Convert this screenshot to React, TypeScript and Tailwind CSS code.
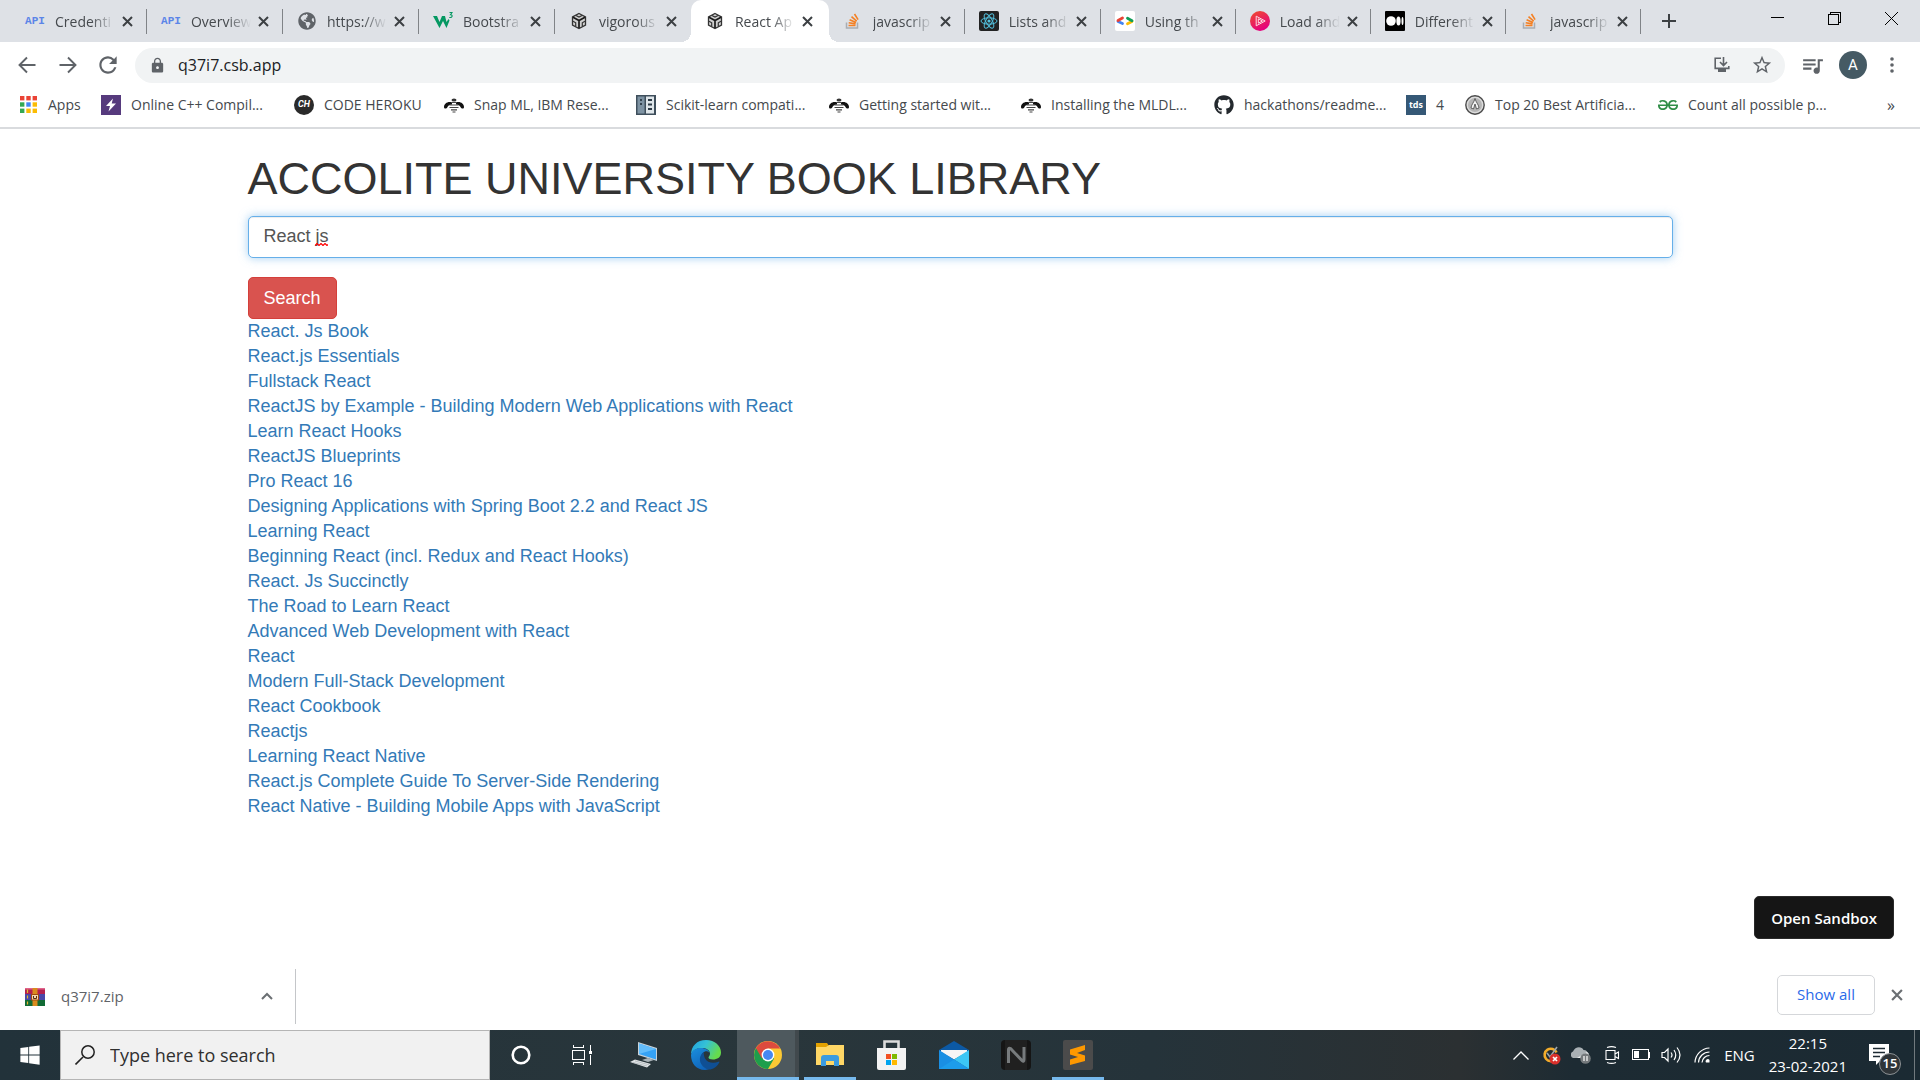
import type { ReactNode } from 'react';
import { FaGithub, FaGlobeAmericas, FaWindows } from 'react-icons/fa';
import { MdLock, MdQueueMusic, MdRefresh, MdStarBorder } from 'react-icons/md';
import { SiGeeksforgeeks } from 'react-icons/si';

/* ---------- site icons ---------- */

const ApiIcon = () => (
  <span className="font-['Liberation_Mono'] text-[11px] leading-5 font-bold text-[#5b85e8]">API</span>
);

const GlobeIcon = () => <FaGlobeAmericas className="size-[18px] text-[#5f6368]" />;

const W3Icon = () => (
  <svg viewBox="0 0 20 20" className="size-5">
    <path d="M0 5h4l2.500 6L9 5h3l1.500 6L15.500 8l1 1.500-3 7.500L10 10l-3.500 7z" fill="#059862" />
    <path d="M16.500 1.500h2.500l-1.500 2.200c2.300 0 2.300 3.300-1.200 2.800" fill="none" stroke="#059862" strokeWidth="1.100" />
  </svg>
);

const SandboxIcon = () => (
  <svg viewBox="0 0 20 20" className="size-5">
    <path d="M10 2.500 16.500 6v8L10 17.500 3.500 14V6z" fill="#d0d0d0" stroke="#333" strokeWidth="1.300" />
    <path d="M4 6.200 10 9.500l6-3.300M10 9.500V17" fill="none" stroke="#1a1a1a" strokeWidth="1.700" />
    <path d="M7 4.500l3 1.600 3-1.600M4 10.300l2.700 1.500v3.200M16 10.300l-2.700 1.500v3.200" fill="none" stroke="#333" strokeWidth="1.200" />
  </svg>
);

const StackIcon = () => (
  <svg viewBox="0 0 20 20" className="size-5">
    <path d="M3.500 11.500v5.500h11v-5.500" fill="none" stroke="#a9adb2" strokeWidth="1.500" />
    <path d="M5.500 14.500h7M5.700 11.700l6.900 1.200M6.600 8.700l6.400 2.900M8.500 5.600l5.200 4.500M11.500 3l3.600 5.600" stroke="#f48024" strokeWidth="1.600" />
  </svg>
);

const ReactIcon = () => (
  <svg viewBox="0 0 20 20" className="size-5">
    <rect width="20" height="20" rx="2" fill="#222" />
    <g fill="none" stroke="#53c1de" strokeWidth="1">
      <ellipse cx="10" cy="10" rx="8" ry="3.200" />
      <ellipse cx="10" cy="10" rx="8" ry="3.200" transform="rotate(60 10 10)" />
      <ellipse cx="10" cy="10" rx="8" ry="3.200" transform="rotate(120 10 10)" />
    </g>
    <circle cx="10" cy="10" r="1.600" fill="#53c1de" />
  </svg>
);

const DevelopersIcon = () => (
  <svg viewBox="0 0 20 20" className="size-5">
    <rect width="20" height="20" rx="2" fill="#fff" />
    <g strokeWidth="2.800" strokeLinecap="round">
      <path d="M3 10.500 7.500 12.500" stroke="#4285f4" />
      <path d="M3 9.500 7.500 7" stroke="#ea4335" />
      <path d="M12.500 12.800 17 10.500" stroke="#fbbc04" />
      <path d="M12.500 7.200 17 9.800" stroke="#0f9d58" />
    </g>
  </svg>
);

const PluralsightIcon = () => (
  <svg viewBox="0 0 20 20" className="size-5">
    <defs>
      <linearGradient id="ps" x1="0" y1="0" x2="0.500" y2="1">
        <stop offset="0" stopColor="#f0502c" />
        <stop offset="1" stopColor="#e5007e" />
      </linearGradient>
    </defs>
    <circle cx="10" cy="10" r="10" fill="url(#ps)" />
    <path d="M6.200 5.200v9.600l9-4.800zM8.300 7.800v4.400l4.200-2.200z" fill="none" stroke="#ffd9e2" strokeWidth="1" />
  </svg>
);

const MediumIcon = () => (
  <svg viewBox="0 0 20 20" className="size-5">
    <rect width="20" height="20" rx="1" fill="#000" />
    <circle cx="6" cy="10" r="4.800" fill="#fff" />
    <ellipse cx="13.500" cy="10" rx="2.100" ry="4.500" fill="#fff" />
    <ellipse cx="17.500" cy="10" rx="1" ry="4" fill="#fff" />
  </svg>
);

const AppsIcon = () => {
  const colours = ['#ea4335', '#ea4335', '#ea4335', '#34a853', '#4285f4', '#fbbc04', '#34a853', '#fbbc04', '#fbbc04'];
  return (
    <svg viewBox="0 0 17 17" className="size-[17px]">
      {colours.map((c, i) => (
        <rect key={i} x={(i % 3) * 6.300} y={Math.floor(i / 3) * 6.300} width="4.400" height="4.400" fill={c} />
      ))}
    </svg>
  );
};

const BoltIcon = () => (
  <svg viewBox="0 0 20 20" className="size-5">
    <rect width="20" height="20" fill="#563a7d" />
    <path d="M12 3.500 5 11h4l-1.500 5.500 7.500-8h-4.300z" fill="#fff" />
  </svg>
);

const HerokuIcon = () => (
  <span className="flex size-5 items-center justify-center rounded-full bg-[#2a2a2a] font-['Roboto'] text-[9px] font-bold text-white italic">CH</span>
);

const BeeIcon = () => (
  <svg viewBox="0 0 20 20" className="size-5">
    <ellipse cx="10" cy="5" rx="2.500" ry="1.500" fill="#333" />
    <path d="M8 7.500C4 6 0 8.500 0 12c0 2 2.500 2 3.500 0C4 10.500 6 9.500 8 9.500M12 7.500c4-1.500 8 1 8 4.500 0 2-2.500 2-3.500 0-.5-1.500-2.500-2.500-4.500-2.500" fill="#111" />
    <path d="M7 7.500h6M5.500 10h9M5.500 12.500h9M7 14.800h6M8.500 17h3" stroke="#444" strokeWidth="1.200" />
  </svg>
);

const ServerIcon = () => (
  <svg viewBox="0 0 20 20" className="size-5">
    <rect width="20" height="20" fill="#3f4f5c" />
    <rect x="1.500" y="1.500" width="7" height="17" fill="#7e93a3" />
    <rect x="10" y="1.500" width="8" height="17" fill="#dfe6ea" />
    <path d="M5 4v2M5 8v2M12 5h4M12 9.500h4M12 14h4" stroke="#2d3b46" strokeWidth="1.800" />
  </svg>
);

const TdsIcon = () => (
  <span className="flex size-5 items-center justify-center bg-[#355876] font-['Open_Sans'] text-[9px] font-bold text-white">tds</span>
);

const CoinIcon = () => (
  <svg viewBox="0 0 20 20" className="size-5">
    <circle cx="10" cy="10" r="9.200" fill="#dcdcdc" stroke="#4a4a4a" strokeWidth="1.400" />
    <circle cx="10" cy="10" r="7" fill="#b5b5b5" />
    <path d="M10 3.500c-1 4-4 6.500-4 9.500l2.500 1L10 9l1.500 5 2.500-1c0-3-3-5.500-4-9.500z" fill="#f4f4f4" stroke="#444" strokeWidth=".8" />
  </svg>
);

/* ---------- browser chrome ---------- */

const CloseX = ({ className }: { className: string }) => (
  <svg viewBox="0 0 11 11" className={className}>
    <path d="M1 1l9 9M10 1l-9 9" stroke="currentColor" strokeWidth="2" />
  </svg>
);

type TabInfo = { title: string; icon: ReactNode; size: string; active?: boolean; edge?: boolean };

const tabs: TabInfo[] = [
  { title: 'Credenti', icon: <ApiIcon />, size: 'flex-[136]', edge: true },
  { title: 'Overview', icon: <ApiIcon />, size: 'flex-[136]', edge: true },
  { title: 'https://w', icon: <GlobeIcon />, size: 'flex-[136]', edge: true },
  { title: 'Bootstra', icon: <W3Icon />, size: 'flex-[136]', edge: true },
  { title: 'vigorous', icon: <SandboxIcon />, size: 'flex-[136]' },
  { title: 'React Ap', icon: <SandboxIcon />, size: 'flex-[138]', active: true },
  { title: 'javascrip', icon: <StackIcon />, size: 'flex-[136]', edge: true },
  { title: 'Lists and', icon: <ReactIcon />, size: 'flex-[136]', edge: true },
  { title: 'Using th', icon: <DevelopersIcon />, size: 'flex-[135]', edge: true },
  { title: 'Load and', icon: <PluralsightIcon />, size: 'flex-[135]', edge: true },
  { title: 'Different', icon: <MediumIcon />, size: 'flex-[135]', edge: true },
  { title: 'javascrip', icon: <StackIcon />, size: 'flex-[135]', edge: true },
];

function Tab({ title, icon, size, active, edge }: TabInfo) {
  return (
    <div className={`relative flex h-full min-w-0 items-center pl-3.5 ${size} ${active ? 'rounded-t-[10px] bg-white' : ''}`}>
      {active && (
        <>
          <span className="absolute -left-2.5 bottom-0 size-2.5 bg-[radial-gradient(circle_at_0_0,#dee1e6_10px,#fff_10px)]" />
          <span className="absolute -right-2.5 bottom-0 size-2.5 bg-[radial-gradient(circle_at_100%_0,#dee1e6_10px,#fff_10px)]" />
        </>
      )}
      <span className="flex size-5 shrink-0 items-center justify-center">{icon}</span>
      <span className="ml-2.5 w-[60px] mask-r-from-60% text-[14px] whitespace-nowrap text-[#45494d]">{title}</span>
      <button aria-label={`Close ${title}`} className="ml-[7px] shrink-0 text-[#3c4043]">
        <CloseX className="size-[11px]" />
      </button>
      {edge && <span className="absolute right-0 h-[25px] w-px bg-[#808387]" />}
    </div>
  );
}

function TabStrip() {
  return (
    <div className="flex h-[42px] justify-between bg-[#dee1e6]">
      <div className="flex max-w-[1677px] min-w-0 flex-1 items-center pl-[11px]">
        {tabs.map((t, i) => (
          <Tab key={i} {...t} />
        ))}
        <button aria-label="New tab" className="ml-5 shrink-0 text-[#3c4043]">
          <svg viewBox="0 0 16 16" className="size-4">
            <path d="M8 1v14M1 8h14" stroke="currentColor" strokeWidth="2" />
          </svg>
        </button>
      </div>
      <div className="flex h-[37px] items-center gap-11 pr-[22px] text-black">
        <button aria-label="Minimize">
          <svg viewBox="0 0 13 13" className="size-[13px]" shapeRendering="crispEdges">
            <path d="M0 5.500h13" stroke="currentColor" />
          </svg>
        </button>
        <button aria-label="Restore">
          <svg viewBox="0 0 13 13" className="size-[13px]" shapeRendering="crispEdges">
            <path d="M.5 2.500h10v10H.5zM2.500 2.500v-2h10v10h-2" fill="none" stroke="currentColor" />
          </svg>
        </button>
        <button aria-label="Close window">
          <svg viewBox="0 0 13 13" className="size-[13px]">
            <path d="M0 0l13 13M13 0 0 13" stroke="currentColor" />
          </svg>
        </button>
      </div>
    </div>
  );
}

function Toolbar() {
  return (
    <div className="flex h-[46px] items-center bg-white pr-[26px] pl-[18px] text-[#5f6368]">
      <button aria-label="Back">
        <svg viewBox="0 0 18 18" className="size-[18px]">
          <path d="M17.500 9H2M9 1.500 1.500 9 9 16.500" fill="none" stroke="currentColor" strokeWidth="1.900" />
        </svg>
      </button>
      <button aria-label="Forward" className="ml-[23px]">
        <svg viewBox="0 0 18 18" className="size-[18px]">
          <path d="M.5 9H16M9 1.500 16.500 9 9 16.500" fill="none" stroke="currentColor" strokeWidth="1.900" />
        </svg>
      </button>
      <button aria-label="Reload" className="ml-[18px]">
        <MdRefresh className="size-[26px]" />
      </button>
      <div className="ml-3.5 flex h-[35px] flex-1 items-center rounded-full bg-[#f1f3f4] pr-3 pl-3.5">
        <MdLock className="size-[17px] shrink-0" />
        <input aria-label="Address" defaultValue="q37i7.csb.app" className="ml-3 min-w-0 flex-1 bg-transparent text-base text-[#202124] outline-none" />
        <button aria-label="Install app">
          <svg viewBox="0 0 16 16" className="size-4">
            <path d="M7 1.200H1.200v10.200h13.600V9M9.500 0v8M6 5l3.500 3.500L13 5" fill="none" stroke="currentColor" strokeWidth="1.600" />
            <path d="M4 12h8v3H4z" fill="currentColor" />
          </svg>
        </button>
        <button aria-label="Bookmark this page" className="ml-[21px]">
          <MdStarBorder className="size-[22px]" />
        </button>
      </div>
      <button aria-label="Media controls" className="ml-[15px]">
        <MdQueueMusic className="size-[25px]" />
      </button>
      <button aria-label="Profile" className="ml-[14px] flex size-7 items-center justify-center rounded-full bg-[#455a64] font-['Roboto'] text-[15px] text-white">
        A
      </button>
      <button aria-label="Menu" className="ml-[23px]">
        <svg viewBox="0 0 4 16" className="h-4 w-1" fill="currentColor">
          <circle cx="2" cy="2" r="1.800" />
          <circle cx="2" cy="8" r="1.800" />
          <circle cx="2" cy="14" r="1.800" />
        </svg>
      </button>
    </div>
  );
}

const bookmarks: { label: string; icon: ReactNode; width: string }[] = [
  { label: 'Apps', icon: <AppsIcon />, width: 'w-[83px]' },
  { label: 'Online C++ Compil...', icon: <BoltIcon />, width: 'w-[193px]' },
  { label: 'CODE HEROKU', icon: <HerokuIcon />, width: 'w-[150px]' },
  { label: 'Snap ML, IBM Rese...', icon: <BeeIcon />, width: 'w-[192px]' },
  { label: 'Scikit-learn compati...', icon: <ServerIcon />, width: 'w-[193px]' },
  { label: 'Getting started wit...', icon: <BeeIcon />, width: 'w-[192px]' },
  { label: 'Installing the MLDL...', icon: <BeeIcon />, width: 'w-[193px]' },
  { label: 'hackathons/readme...', icon: <FaGithub className="size-5 text-[#24292e]" />, width: 'w-[192px]' },
  { label: '4', icon: <TdsIcon />, width: 'w-[59px]' },
  { label: 'Top 20 Best Artificia...', icon: <CoinIcon />, width: 'w-[193px]' },
  { label: 'Count all possible p...', icon: <SiGeeksforgeeks className="size-5 text-[#2f8d46]" />, width: 'w-[193px]' },
];

function BookmarkBar() {
  return (
    <nav aria-label="Bookmarks" className="flex h-[41px] items-center border-b-2 border-[#d9dbde] bg-white pb-1.5 pl-[18px] text-[14px] text-[#45494d]">
      {bookmarks.map((b) => (
        <a key={b.label} href="#" className={`flex shrink-0 items-center gap-2.5 whitespace-nowrap ${b.width}`}>
          <span className="flex size-5 shrink-0 items-center justify-center">{b.icon}</span>
          {b.label}
        </a>
      ))}
      <button aria-label="More bookmarks" className="mr-[25px] ml-auto text-base leading-5">»</button>
    </nav>
  );
}

/* ---------- page ---------- */

const books = [
  'React. Js Book',
  'React.js Essentials',
  'Fullstack React',
  'ReactJS by Example - Building Modern Web Applications with React',
  'Learn React Hooks',
  'ReactJS Blueprints',
  'Pro React 16',
  'Designing Applications with Spring Boot 2.2 and React JS',
  'Learning React',
  'Beginning React (incl. Redux and React Hooks)',
  'React. Js Succinctly',
  'The Road to Learn React',
  'Advanced Web Development with React',
  'React',
  'Modern Full-Stack Development',
  'React Cookbook',
  'Reactjs',
  'Learning React Native',
  'React.js Complete Guide To Server-Side Rendering',
  'React Native - Building Mobile Apps with JavaScript',
];

function Library() {
  return (
    <main className="relative flex-1 bg-white font-['Liberation_Sans',sans-serif] text-lg leading-[25px]">
      <div className="mx-auto max-w-[1425px]">
        <h1 className="pt-6 pb-3 text-[45px] leading-[51px] text-[#333]">ACCOLITE UNIVERSITY BOOK LIBRARY</h1>
        <form onSubmit={(e) => e.preventDefault()}>
          <div className="relative">
            <input
              aria-label="Search for books"
              defaultValue="React js"
              className="block h-[42px] w-full rounded-[5px] border border-[#66afe9] bg-white px-[15px] pb-0.5 text-[#555] shadow-[inset_0_1px_1px_rgba(0,0,0,0.075),0_0_10px_rgba(102,175,233,0.6)] outline-none"
            />
            <svg viewBox="0 0 13 3" className="absolute top-[27px] left-[67px] h-[3px] w-[13px]">
              <path d="M0 2.500 2 .5l2 2 2-2 2 2 2-2 2 2 1-1" fill="none" stroke="#f00" strokeWidth="1.200" />
            </svg>
          </div>
          <button type="submit" className="mt-[19px] block h-[42px] rounded-[5px] border border-[#d43f3a] bg-[#d9534f] px-[15px] text-white">
            Search
          </button>
        </form>
        <ul>
          {books.map((b) => (
            <li key={b}>
              <a href="#" className="text-[#337ab7]">{b}</a>
            </li>
          ))}
        </ul>
      </div>
      <button className="absolute right-[26px] bottom-6 h-[43px] rounded-[5px] border border-[#2a2a2a] bg-[#151515] px-4 pt-0.5 font-['Open_Sans',sans-serif] text-[15px] font-semibold text-white">
        Open Sandbox
      </button>
    </main>
  );
}

/* ---------- download shelf ---------- */

const ArchiveIcon = () => (
  <svg viewBox="0 0 20 18" className="h-[18px] w-5">
    <rect width="20" height="6" fill="#b3214f" />
    <rect width="20" height="1.500" fill="#e0648c" />
    <rect y="6" width="20" height="6" fill="#4a46a8" />
    <rect y="12" width="20" height="6" fill="#116b35" />
    <path d="M2.500 1.500v3.500M2.500 7.500v3M2.500 13.500v3" stroke="#e3b52d" strokeWidth="1.200" />
    <rect x="7.500" width="5" height="18" fill="#d98b1e" />
    <rect x="6.500" y="6.500" width="7" height="5.500" fill="#f2d9b0" stroke="#a3480f" />
    <path d="M8.500 8v2.500h3V8" stroke="#5a2b0c" fill="none" />
  </svg>
);

function DownloadShelf() {
  return (
    <div className="flex h-[67px] items-center bg-white pr-[17px]">
      <div className="flex h-[55px] w-[296px] items-center border-r border-[#c4c6c9] pl-[25px]">
        <ArchiveIcon />
        <span className="ml-4 text-[15px] text-[#5f6368]">q37i7.zip</span>
        <button aria-label="Download options" className="mr-[22px] ml-auto pb-0.5 text-[#6b6f73]">
          <svg viewBox="0 0 12 8" className="h-2 w-3">
            <path d="M1 7l5-5 5 5" fill="none" stroke="currentColor" strokeWidth="2" />
          </svg>
        </button>
      </div>
      <div className="ml-auto flex items-center gap-4 pb-1">
        <button className="h-10 w-[98px] rounded-[5px] border border-[#d5d7da] text-[15px] text-[#2a6ae9]">Show all</button>
        <button aria-label="Close downloads bar" className="text-[#6b6f73]">
          <CloseX className="size-3" />
        </button>
      </div>
    </div>
  );
}

/* ---------- taskbar ---------- */

const CortanaIcon = () => (
  <svg viewBox="0 0 20 20" className="size-5">
    <circle cx="10" cy="10" r="8.300" fill="none" stroke="#fff" strokeWidth="2.600" />
  </svg>
);

const TaskViewIcon = () => (
  <svg viewBox="0 0 21 20" className="h-5 w-[21px]" fill="none" stroke="#fff" shapeRendering="crispEdges">
    <path d="M.5 5.500h12v9H.5zM1.500 0v2.500h10V0M1.500 20v-2.500h10V20M18.500 0v6M18.500 10v10" />
    <rect x="17" y="6" width="3" height="3" fill="#fff" stroke="none" />
  </svg>
);

const ComputerIcon = () => (
  <svg viewBox="0 0 28 26" className="h-[26px] w-7">
    <path d="M8 0 27 6v13L8 13z" fill="#c8d2d8" />
    <path d="M9 1.500 26 7v10.500L9 12z" fill="#35a2f5" />
    <path d="M9 1.500 26 7 9 12z" fill="#63bdfb" />
    <path d="M12 18l6-2 6 2-6 2z" fill="#aab3b8" />
    <path d="M0 20l5-2.500L21 22l-4 3.500z" fill="#e2e5e7" />
    <path d="M3 20.500l14 3.500M5 19l14 3.800" stroke="#9ca4a9" strokeWidth=".6" />
  </svg>
);

const EdgeIcon = () => (
  <svg viewBox="0 0 30 30" className="size-[30px]">
    <defs>
      <linearGradient id="edgeTop" x1="0" y1="0" x2="1" y2="0.400">
        <stop offset="0" stopColor="#1f9fe0" />
        <stop offset=".5" stopColor="#35c1d6" />
        <stop offset="1" stopColor="#66dc4c" />
      </linearGradient>
      <linearGradient id="edgeLeft" x1="0" y1="0" x2="0.600" y2="1">
        <stop offset="0" stopColor="#1a8fdd" />
        <stop offset="1" stopColor="#0f62b8" />
      </linearGradient>
    </defs>
    <path d="M0 15C0 6 6 0 15 0s15 6 15 12.500c0 5-4 7-8 7-3 0-4.500-1-4.500-2s1.500-1.500 1.500-4C19 10 15 8 10.500 8 5 8 1 11 0 15z" fill="url(#edgeTop)" />
    <path d="M0 15c1-4.500 5-7 9.500-7C15 8 18 10.500 18.500 13c-1-1.500-3-2-4.500-1.500-3 1-4.500 4.500-3 9 1.500 4 6 6.500 10 6.500-2 2-4.500 3-7 3C5.500 30 0 23.500 0 15z" fill="url(#edgeLeft)" />
    <path d="M13 12c-4 2-5.500 8-2.500 12.500 2 3 5.500 5.500 9 5 4-1 7-3.500 8.800-7 .3-.7-.2-1.100-.8-.8-5 2.300-11.500 1-13.500-3.200-1-2-1.500-5-1-6.500z" fill="#0f4f94" />
  </svg>
);

const ChromeIcon = () => (
  <svg viewBox="0 0 28 28" className="size-7">
    <circle cx="14" cy="14" r="14" fill="#fcc934" />
    <path d="M14 14 1.900 7A14 14 0 0 0 14 28l6.100-10.500z" fill="#1e9e4c" />
    <path d="M1.900 7A14 14 0 0 1 26.100 7.500H14L7.900 17.500z" fill="#dd4b3e" />
    <circle cx="14" cy="14" r="6.400" fill="#fff" />
    <circle cx="14" cy="14" r="5" fill="#4688f1" />
  </svg>
);

const ExplorerIcon = () => (
  <svg viewBox="0 0 28 24" className="h-6 w-7">
    <path d="M0 0h11l2 3v3H0z" fill="#e3a100" />
    <path d="M0 4h10l3-2h15v20H0z" fill="#ffd766" />
    <path d="M5 23V15q0-3 3-3h12q3 0 3 3v8h-5v-5h-8v5z" fill="#3b9be0" />
  </svg>
);

const StoreIcon = () => (
  <svg viewBox="0 0 30 30" className="size-[30px]">
    <path d="M7.500 9V1.500h14V9" fill="none" stroke="#dcdcdc" strokeWidth="2.600" />
    <path d="M0 8h29v20q0 2-2 2H2q-2 0-2-2z" fill="#f3f3f3" />
    <rect x="9" y="14" width="5" height="5" fill="#f25022" />
    <rect x="15" y="14" width="5" height="5" fill="#7fba00" />
    <rect x="9" y="20" width="5" height="5" fill="#00a4ef" />
    <rect x="15" y="20" width="5" height="5" fill="#ffb900" />
  </svg>
);

const MailIcon = () => (
  <svg viewBox="0 0 30 28" className="h-7 w-[30px]">
    <path d="M0 9 15 0l15 9v6H0z" fill="#0c59a4" />
    <path d="M2 9h26v2L15 18.500 2 11z" fill="#f5f5f5" />
    <path d="M0 9l30 19H0z" fill="#1a8fe3" />
    <path d="M30 9v19L15 18.500z" fill="#3cc6f4" />
    <path d="M0 28 15 18.500 30 28z" fill="#1d9cea" />
  </svg>
);

const NoxIcon = () => (
  <svg viewBox="0 0 30 30" className="size-[30px]">
    <rect width="30" height="30" rx="4" fill="#151515" />
    <rect x="4" width="22" height="30" fill="#202020" />
    <path d="M7.500 23V9.500q0-2 2-1L21 20.500q2 2 2-1V7" fill="none" stroke="#777b7d" strokeWidth="3" />
  </svg>
);

const SublimeIcon = () => (
  <svg viewBox="0 0 30 30" className="size-[30px]">
    <rect width="30" height="30" rx="2" fill="#4b4b4b" />
    <path d="M7 9.500 22 5v5l-8 3 8 2.500v5.500L7 25v-5.500l8-2.500-8-2.500z" fill="#ff9800" />
  </svg>
);

const taskApps: { name: string; icon: ReactNode; state: string; width: string }[] = [
  { name: 'Cortana', icon: <CortanaIcon />, state: '', width: 'w-[61px]' },
  { name: 'Task View', icon: <TaskViewIcon />, state: '', width: 'w-[62px]' },
  { name: 'This PC', icon: <ComputerIcon />, state: '', width: 'w-[62px]' },
  { name: 'Edge', icon: <EdgeIcon />, state: '', width: 'w-[62px]' },
  { name: 'Chrome', icon: <ChromeIcon />, state: 'active', width: 'w-[62px]' },
  { name: 'File Explorer', icon: <ExplorerIcon />, state: 'running', width: 'w-[62px]' },
  { name: 'Store', icon: <StoreIcon />, state: '', width: 'w-[62px]' },
  { name: 'Mail', icon: <MailIcon />, state: '', width: 'w-[62px]' },
  { name: 'Nox', icon: <NoxIcon />, state: '', width: 'w-[62px]' },
  { name: 'Sublime Text', icon: <SublimeIcon />, state: 'running', width: 'w-[62px]' },
];

function SystemTray() {
  return (
    <div className="ml-auto flex items-center text-white">
      <svg viewBox="0 0 16 9" className="mr-3 h-[9px] w-4">
        <path d="M.5 8.500 8 1l7.500 7.500" fill="none" stroke="#fff" strokeWidth="1.300" />
      </svg>
      <svg viewBox="0 0 20 20" className="mr-2.5 size-5">
        <path d="M15.500 7.500A6.200 6.200 0 1 0 14.500 14" fill="none" stroke="#f3ad2b" strokeWidth="2.600" />
        <path d="M6 8l3 4 7-10" fill="none" stroke="#9da6ab" strokeWidth="1.600" />
        <circle cx="14" cy="14" r="5.500" fill="#d9302c" />
        <path d="M12 12l4 4M16 12l-4 4" stroke="#fff" strokeWidth="1.700" />
      </svg>
      <svg viewBox="0 0 20 18" className="mr-3.5 h-[18px] w-5">
        <path d="M2 12a3.500 3.500 0 0 1 0-6.500C4 0 11 0 12.500 4c4 0 5 3 4 8z" fill="#a9b0b4" />
        <path d="M6 12 16 6c2 1 3 4 1 6z" fill="#eceeef" />
        <circle cx="14.500" cy="12.500" r="5.300" fill="#74797c" />
        <path d="M13 10v5M16 10v5" stroke="#fff" strokeWidth="1.200" />
      </svg>
      <svg viewBox="0 0 15 18" className="mr-3 h-[18px] w-[15px]" fill="none" stroke="#fff" strokeWidth="1.100">
        <path d="M1 4.500h9v9H1zM10 8l3.500-2v6.500L10 10.500M2 1.500Q6.500-.3 11 1.500M2 16.500q4.500 1.800 9 0" />
      </svg>
      <svg viewBox="0 0 19 12" className="mr-2.5 h-3 w-[19px]" shapeRendering="crispEdges">
        <path d="M.5 .5h16v10H.5zM17.500 3v6" fill="none" stroke="#fff" />
        <path d="M2 2h5v7H2z" fill="#fff" />
      </svg>
      <svg viewBox="0 0 20 18" className="mr-[13px] h-[18px] w-5" fill="none" stroke="#fff" strokeWidth="1.200">
        <path d="M1 6.500h2.500L7 3v12L3.500 11.500H1zM10 6.500q2 2.500 0 5M13 4q3.500 5 0 10M16 1.500q6 7.500 0 15" />
      </svg>
      <svg viewBox="0 0 16 16" className="mr-[14px] size-4" fill="none" stroke="#fff" strokeWidth="1.200">
        <path d="M1 15.500A15 15 0 0 1 15.500 1M4.500 15.500A11 11 0 0 1 15.500 5M8 15.500A7.500 7.500 0 0 1 15.500 8.500" />
        <path d="M12 15.500a2 2 0 0 1 3.500-2.500v2.500z" fill="#fff" stroke="none" />
      </svg>
      <span className="text-[15px]">ENG</span>
      <div className="ml-3.5 text-center text-[15px] leading-[23px]">
        <div>22:15</div>
        <div>23-02-2021</div>
      </div>
      <button aria-label="15 new notifications" className="relative mr-[13px] ml-[22px] h-9 w-8">
        <svg viewBox="0 0 20 22" className="absolute top-[7px] left-0 h-[22px] w-5">
          <path d="M0 0h20v17h-9l-4 4v-4H0z" fill="#fff" />
          <path d="M4 4.500h12M4 8.500h12M4 12.500h7" stroke="#1d2a33" strokeWidth="1.300" />
        </svg>
        <span className="absolute right-0 bottom-[-2px] flex size-[22px] items-center justify-center rounded-full border border-[#8c9194] bg-[#2f3539] text-[13px] font-semibold">15</span>
      </button>
      <span className="mr-[5px] h-[50px] w-px bg-[#71797e]" />
    </div>
  );
}

function Taskbar() {
  return (
    <div className="flex h-[50px] bg-[linear-gradient(90deg,#22323a_0%,#29363b_40%,#25333a_60%,#2b3032_76%,#1d2b33_82%,#1b2a33_100%)]">
      <button aria-label="Start" className="flex w-[60px] items-center justify-center text-white">
        <FaWindows className="size-[22px]" />
      </button>
      <div className="flex w-[430px] items-center border border-[#b5b5b5] bg-[#f1f1f1] pl-3.5 text-[#222]">
        <svg viewBox="0 0 20 20" className="size-5">
          <path d="M.5 19.500 8 12" stroke="currentColor" strokeWidth="1.600" />
          <circle cx="13" cy="7" r="6.200" fill="none" stroke="currentColor" strokeWidth="1.500" />
        </svg>
        <input aria-label="Taskbar search" placeholder="Type here to search" className="ml-[15px] min-w-0 flex-1 bg-transparent text-lg outline-none placeholder:text-[#2f2f2f]" />
      </div>
      {taskApps.map((a) => (
        <button
          key={a.name}
          aria-label={a.name}
          className={`relative flex items-center justify-center ${a.width} ${a.state === 'active' ? 'border-r-4 border-[#41494d] bg-[#4e595e] pl-1' : ''}`}
        >
          {a.icon}
          {a.state === 'active' && <span className="absolute right-[-4px] bottom-0 left-0 h-[3px] bg-[#76b9ed]" />}
          {a.state === 'running' && <span className="absolute inset-x-[5px] bottom-0 h-[3px] bg-[#76b9ed]" />}
        </button>
      ))}
      <SystemTray />
    </div>
  );
}

export default function App() {
  return (
    <div className="flex min-h-screen flex-col bg-white font-['Open_Sans',sans-serif]">
      <header>
        <TabStrip />
        <Toolbar />
        <BookmarkBar />
      </header>
      <Library />
      <DownloadShelf />
      <Taskbar />
    </div>
  );
}
